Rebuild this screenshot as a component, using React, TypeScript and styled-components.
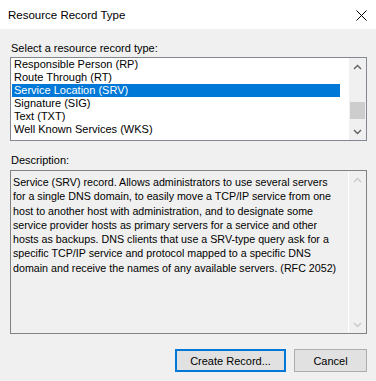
import React from "react";
import styled, { createGlobalStyle } from "styled-components";

const GlobalStyle = createGlobalStyle`
  html, body {
    margin: 0;
    padding: 0;
    background: #f0f0f0;
  }
  body {
    font-family: "Liberation Sans", Arial, sans-serif;
    font-size: 11px;
    color: #000;
  }
`;

const recordTypes = [
  "Responsible Person (RP)",
  "Route Through (RT)",
  "Service Location (SRV)",
  "Signature (SIG)",
  "Text (TXT)",
  "Well Known Services (WKS)",
];

const descriptionLines = [
  "Service (SRV) record. Allows administrators to use several servers",
  "for a single DNS domain, to easily move a TCP/IP service from one",
  "host to another host with administration, and to designate some",
  "service provider hosts as primary servers for a service and other",
  "hosts as backups. DNS clients that use a SRV-type query ask for a",
  "specific TCP/IP service and protocol mapped to a specific DNS",
  "domain and receive the names of any available servers. (RFC 2052)",
];

const Chevron = ({ up, color }: { up?: boolean; color: string }) => (
  <svg width="9" height="6" viewBox="0 0 9 6">
    <path
      d={up ? "M1 5 L4.5 1.5 L8 5" : "M1 1 L4.5 4.5 L8 1"}
      fill="none"
      stroke={color}
      strokeWidth="1.4"
    />
  </svg>
);

export default function App() {
  return (
    <>
      <GlobalStyle />
      <Dialog>
        <TitleBar>
          <Title>Resource Record Type</Title>
          <CloseButton>
            <svg width="11" height="11" viewBox="0 0 11 11">
              <path d="M0.5 0.5 L10.5 10.5 M10.5 0.5 L0.5 10.5" stroke="#000" strokeWidth="1" />
            </svg>
          </CloseButton>
        </TitleBar>
        <Body>
          <Label>Select a resource record type:</Label>
          <ListBox>
            <Items>
              {recordTypes.map(t => (
                <Item key={t} selected={t === "Service Location (SRV)"}>
                  {t}
                </Item>
              ))}
            </Items>
            <ScrollBar>
              <Arrow>
                <Chevron up color="#606060" />
              </Arrow>
              <Track>
                <Thumb />
              </Track>
              <Arrow>
                <Chevron color="#606060" />
              </Arrow>
            </ScrollBar>
          </ListBox>
          <Label gap={13}>Description:</Label>
          <DescBox>
            <DescText>
              {descriptionLines.map(l => (
                <div key={l}>{l}</div>
              ))}
            </DescText>
            <DescScroll>
              <Arrow>
                <Chevron up color="#c8c8c8" />
              </Arrow>
              <Arrow>
                <Chevron color="#c8c8c8" />
              </Arrow>
            </DescScroll>
          </DescBox>
          <Buttons>
            <Button primary>Create Record...</Button>
            <Button>Cancel</Button>
          </Buttons>
        </Body>
      </Dialog>
    </>
  );
}

const Dialog = styled.div`
  width: 376px;
  height: 381px;
  display: flex;
  flex-direction: column;
  background: #f0f0f0;
  overflow: hidden;
`;

const TitleBar = styled.div`
  height: 29px;
  background: #fff;
  display: flex;
  align-items: center;
  justify-content: space-between;
  padding: 0 9px 0 8px;
  flex-shrink: 0;
`;

const Title = styled.div`
  font-size: 11.5px;
  color: #000;
`;

const CloseButton = styled.div`
  display: flex;
  align-items: center;
  margin-top: 1px;
`;

const Body = styled.div`
  display: flex;
  flex-direction: column;
  padding: 13px 9px 0 10px;
`;

const Label = styled.div<{ gap?: number }>`
  height: 13px;
  line-height: 13px;
  margin-top: ${p => p.gap || 0}px;
  padding-left: 1px;
`;

const ListBox = styled.div`
  margin-top: 2px;
  height: 84px;
  box-sizing: border-box;
  border: 1px solid #828790;
  background: #fff;
  display: flex;
`;

const Items = styled.div`
  flex: 1;
  padding: 0 9px 0 1px;
`;

const Item = styled.div<{ selected?: boolean }>`
  height: 13px;
  line-height: 13px;
  padding-left: 2px;
  background: ${p => (p.selected ? "#0078d7" : "transparent")};
  color: ${p => (p.selected ? "#fff" : "#000")};
  white-space: nowrap;
`;

const ScrollBar = styled.div`
  width: 17px;
  background: #f0f0f0;
  display: flex;
  flex-direction: column;
`;

const Arrow = styled.div`
  height: 17px;
  display: flex;
  align-items: center;
  justify-content: center;
`;

const Track = styled.div`
  flex: 1;
  position: relative;
`;

const Thumb = styled.div`
  position: absolute;
  left: 1px;
  right: 1px;
  top: 27px;
  height: 17px;
  background: #cdcdcd;
`;

const DescBox = styled.div`
  margin-top: 3px;
  height: 164px;
  box-sizing: border-box;
  border: 1px solid #828282;
  display: flex;
`;

const DescText = styled.div`
  flex: 1;
  padding: 4px 0 0 2px;
  font-size: 10.7px;
  line-height: 14.3px;
  white-space: nowrap;
`;

const DescScroll = styled.div`
  width: 17px;
  border-left: 1px solid #fff;
  display: flex;
  flex-direction: column;
  justify-content: space-between;
`;

const Buttons = styled.div`
  margin-top: 15px;
  display: flex;
  justify-content: flex-end;
  gap: 8px;
`;

const Button = styled.div<{ primary?: boolean }>`
  width: ${p => (p.primary ? "111px" : "73px")};
  height: 23px;
  box-sizing: border-box;
  display: flex;
  align-items: center;
  justify-content: center;
  background: #e1e1e1;
  border: ${p => (p.primary ? "2px solid #0078d7" : "1px solid #adadad")};
  font-size: 11px;
`;
